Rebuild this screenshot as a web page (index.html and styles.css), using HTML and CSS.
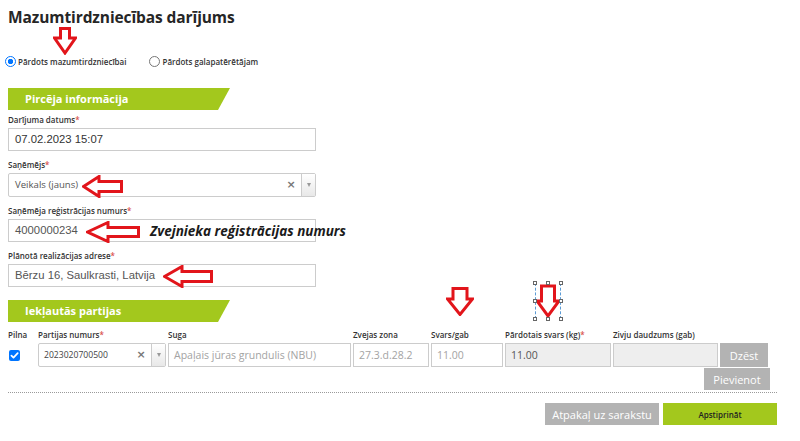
FILE: index.html
```html
<!DOCTYPE html>
<html lang="lv">
<head>
<meta charset="utf-8">
<title>Mazumtirdzniecības darījums</title>
<link rel="stylesheet" href="styles.css">
</head>
<body>
<div class="page">
  <h1 class="title">Mazumtirdzniecības darījums</h1>

  <div class="radios">
    <label class="radio"><span class="dot on"></span>Pārdots mazumtirdzniecībai</label>
    <label class="radio r2"><span class="dot"></span>Pārdots galapatērētājam</label>
  </div>

  <div class="bar">Pircēja informācija</div>

  <div class="field first">
    <div class="lbl">Darījuma datums<i>*</i></div>
    <div class="inp dark">07.02.2023 15:07</div>
  </div>

  <div class="field">
    <div class="lbl">Saņēmējs<i>*</i></div>
    <div class="sel wide">
      <span class="sel-text">Veikals (jauns)</span>
      <span class="clr">×</span>
      <span class="caret"><b></b></span>
    </div>
  </div>

  <div class="field">
    <div class="lbl">Saņēmēja reģistrācijas numurs<i>*</i></div>
    <div class="inp">4000000234</div>
  </div>

  <div class="field">
    <div class="lbl">Plānotā realizācijas adrese<i>*</i></div>
    <div class="inp">Bērzu 16, Saulkrasti, Latvija</div>
  </div>

  <div class="bar bar2">Iekļautās partijas</div>

  <div class="grid">
    <div class="th">Pilna</div>
    <div class="th">Partijas numurs<i>*</i></div>
    <div class="th">Suga</div>
    <div class="th">Zvejas zona</div>
    <div class="th">Svars/gab</div>
    <div class="th">Pārdotais svars (kg)<i>*</i></div>
    <div class="th">Zivju daudzums (gab)</div>
    <div class="th"></div>

    <div class="td chk-cell"><span class="chk"><svg viewBox="0 0 11 11" width="11" height="11"><path d="M2.4 5.6 L4.5 7.7 L8.7 3.2" fill="none" stroke="#fff" stroke-width="1.7" stroke-linecap="round" stroke-linejoin="round"/></svg></span></div>
    <div class="td">
      <div class="sel small">
        <span class="sel-text">2023020700500</span>
        <span class="clr">×</span>
        <span class="caret"><b></b></span>
      </div>
    </div>
    <div class="td"><div class="cell ro">Apaļais jūras grundulis (NBU)</div></div>
    <div class="td"><div class="cell ro">27.3.d.28.2</div></div>
    <div class="td"><div class="cell ro">11.00</div></div>
    <div class="td"><div class="cell gray">11.00</div></div>
    <div class="td"><div class="cell gray"></div></div>
    <div class="td-btns">
      <div class="btn grey btn-row">Dzēst</div>
      <div class="btn grey btn-add">Pievienot</div>
    </div>
  </div>

  <div class="sep"></div>

  <div class="actions">
    <div class="btn grey btn-back">Atpakaļ uz sarakstu</div>
    <div class="btn green btn-ok">Apstiprināt</div>
  </div>

  <!-- annotations drawn over the screenshot -->
  <svg class="ann a-title" width="24" height="28" viewBox="0 0 24 28"><polygon points="7.5,1.5 16.5,1.5 16.5,11 22.5,11 12,26 1.5,11 7.5,11" fill="#fff" stroke="#e2151b" stroke-width="3" stroke-linejoin="miter"/></svg>
  <svg class="ann a-sel" width="41" height="23" viewBox="0 0 41 23"><polygon points="1.5,11.5 17,1.5 17,6.5 39.5,6.5 39.5,16.5 17,16.5 17,21.5" fill="#fff" stroke="#e2151b" stroke-width="3"/></svg>
  <svg class="ann a-reg" width="54" height="22" viewBox="0 0 54 22"><polygon points="1.5,11 22,1.5 22,6.5 52.5,6.5 52.5,15.5 22,15.5 22,20.5" fill="#fff" stroke="#e2151b" stroke-width="3"/></svg>
  <svg class="ann a-adr" width="50" height="23" viewBox="0 0 50 23"><polygon points="1.5,11.5 19,1.5 19,6.5 48.5,6.5 48.5,16.5 19,16.5 19,21.5" fill="#fff" stroke="#e2151b" stroke-width="3"/></svg>
  <div class="ann note">Zvejnieka reģistrācijas numurs</div>
  <svg class="ann a-svars" width="28" height="29" viewBox="0 0 28 29"><polygon points="7,1.5 21,1.5 21,12 26.5,12 14,27.5 1.5,12 7,12" fill="#fff" stroke="#e2151b" stroke-width="3"/></svg>
  <div class="ann a-box">
    <svg width="26" height="36" viewBox="0 0 26 36"><polygon points="6.5,3 19.5,3 19.5,18 24,18 13,33 2,18 6.5,18" fill="#fff" stroke="#e2151b" stroke-width="3"/></svg>
    <span class="h h1"></span><span class="h h2"></span><span class="h h3"></span>
    <span class="h h4"></span><span class="h h5"></span>
    <span class="h h6"></span><span class="h h7"></span><span class="h h8"></span>
  </div>
</div>
</body>
</html>
```

FILE: styles.css
```css
* { box-sizing: border-box; }

body {
  margin: 0;
  background: #fff;
  font-family: "Open Sans", "Liberation Sans", sans-serif;
  color: #333;
}

.page {
  position: relative;
  width: 777px;
  padding-left: 8px;
}

.title {
  margin: 0;
  padding-top: 5px;
  font-size: 15.5px;
  line-height: 24px;
  font-weight: 700;
  color: #262626;
  letter-spacing: -0.1px;
}

.radios {
  display: flex;
  align-items: center;
  height: 14px;
  margin: 25px 0 0 -3px;
}

.radio {
  display: flex;
  align-items: center;
  gap: 2px;
  font-size: 8px;
  font-weight: 600;
  color: #333;
}

.r2 { margin-left: 23px; }

.dot {
  width: 11px;
  height: 11px;
  border-radius: 50%;
  border: 1px solid #767676;
  background: #fff;
}

.dot.on {
  border-color: #0075ff;
  background: radial-gradient(circle, #0075ff 2.4px, #fff 3px);
}

.bar {
  width: 222px;
  height: 22px;
  margin-top: 20px;
  padding-left: 17px;
  background: #a3c81d;
  clip-path: polygon(0 0, 100% 0, calc(100% - 12px) 100%, 0 100%);
  color: #fff;
  font-size: 11px;
  font-weight: 700;
  line-height: 22px;
}

.bar2 { margin-top: 13px; }

.field { margin-top: 9px; width: 308px; }
.field.first { margin-top: 5px; }

.lbl, .th {
  font-size: 8px;
  font-weight: 600;
  line-height: 10px;
  color: #333;
  white-space: nowrap;
}

.lbl { margin-bottom: 3px; }

.lbl i, .th i { font-style: normal; color: #d9534f; }

.inp {
  height: 23px;
  border: 1px solid #ccc;
  padding: 0 6px;
  font-family: "Liberation Sans", Arial, sans-serif;
  font-size: 11.3px;
  line-height: 21px;
  color: #555;
  background: #fff;
}

.inp.dark { color: #333; }

.sel {
  display: flex;
  align-items: stretch;
  height: 24px;
  border: 1px solid #ccc;
  background: #fff;
  border-radius: 2px;
}

.sel-text {
  flex: 1;
  padding-left: 6px;
  font-size: 9.6px;
  line-height: 22px;
  color: #555;
  white-space: nowrap;
}

.sel.small .sel-text { font-size: 8.6px; padding-left: 5px; color: #444; }

.clr {
  width: 20px;
  text-align: center;
  font-family: "DejaVu Sans", sans-serif;
  font-size: 11px;
  font-weight: 700;
  line-height: 22px;
  color: #777;
}

.caret {
  width: 14px;
  border-left: 1px solid #ccc;
  background: linear-gradient(#fff, #e8e8e8);
  display: flex;
  align-items: center;
  justify-content: center;
}

.caret b {
  width: 0;
  height: 0;
  border-left: 2.5px solid transparent;
  border-right: 2.5px solid transparent;
  border-top: 4px solid #999;
}

.grid {
  display: grid;
  grid-template-columns: 28px 128px 183px 76px 72px 106px 105px 48px;
  column-gap: 2px;
  row-gap: 3px;
  align-items: start;
  margin-top: 8px;
}

.td { height: 24px; min-width: 0; }
.th { min-width: 0; }

.td-btns {
  display: flex;
  flex-direction: column;
  align-items: flex-start;
  gap: 1px;
}

.chk-cell { display: flex; align-items: center; padding-left: 1px; }

.chk {
  display: block;
  width: 11px;
  height: 11px;
  border-radius: 2px;
  background: #0075ff;
}

.chk svg { display: block; }

.cell {
  height: 24px;
  border: 1px solid #ccc;
  padding: 0 5px;
  font-size: 10.5px;
  line-height: 22px;
  white-space: nowrap;
  overflow: hidden;
}

.cell.ro { background: #fff; color: #a3a3a3; }
.cell.gray { background: #eeeeee; color: #555; }

.btn {
  display: flex;
  align-items: center;
  justify-content: center;
  font-family: "Open Sans", sans-serif;
  cursor: pointer;
  white-space: nowrap;
  flex-shrink: 0;
}

.btn.grey { background: #b3b3b3; color: #fff; font-size: 11px; }
.btn.green { background: #a3c81d; color: #222; font-size: 8px; font-weight: 600; }

.btn-row { width: 48px; height: 24px; }

.btn-add {
  width: 66px;
  height: 22px;
  margin-left: -16px;
}

.sep {
  margin-top: 2px;
  border-top: 1px dotted #9a9a9a;
}

.actions {
  display: flex;
  justify-content: flex-end;
  gap: 4px;
  margin-top: 10px;
}

.btn-back { width: 114px; height: 22px; font-size: 10.5px; }
.btn-ok { width: 114px; height: 22px; }

/* annotations */
.ann { position: absolute; display: block; }
.a-title { left: 53px; top: 27px; }
.a-sel { left: 82px; top: 175px; }
.a-reg { left: 86px; top: 221px; }
.a-adr { left: 163px; top: 265px; }
.a-svars { left: 446px; top: 287px; }

.note {
  left: 150px;
  top: 221px;
  font-size: 13.5px;
  font-weight: 700;
  font-style: italic;
  line-height: 20px;
  color: #1b1b1b;
  white-space: nowrap;
}

.a-box {
  left: 535px;
  top: 283px;
  width: 26px;
  height: 36px;
  border-left: 1px dashed #5b9bd5;
  border-right: 1px dashed #5b9bd5;
}

.a-box svg { position: absolute; left: -1px; top: 0; }

.h {
  position: absolute;
  width: 4px;
  height: 4px;
  background: #fff;
  border: 1px solid #666;
}
.h1 { left: -3px; top: -2px; }
.h2 { left: 10px; top: -2px; }
.h3 { right: -3px; top: -2px; }
.h4 { left: -3px; top: 16px; }
.h5 { right: -3px; top: 16px; }
.h6 { left: -3px; bottom: -2px; }
.h7 { left: 10px; bottom: -2px; }
.h8 { right: -3px; bottom: -2px; }
```
